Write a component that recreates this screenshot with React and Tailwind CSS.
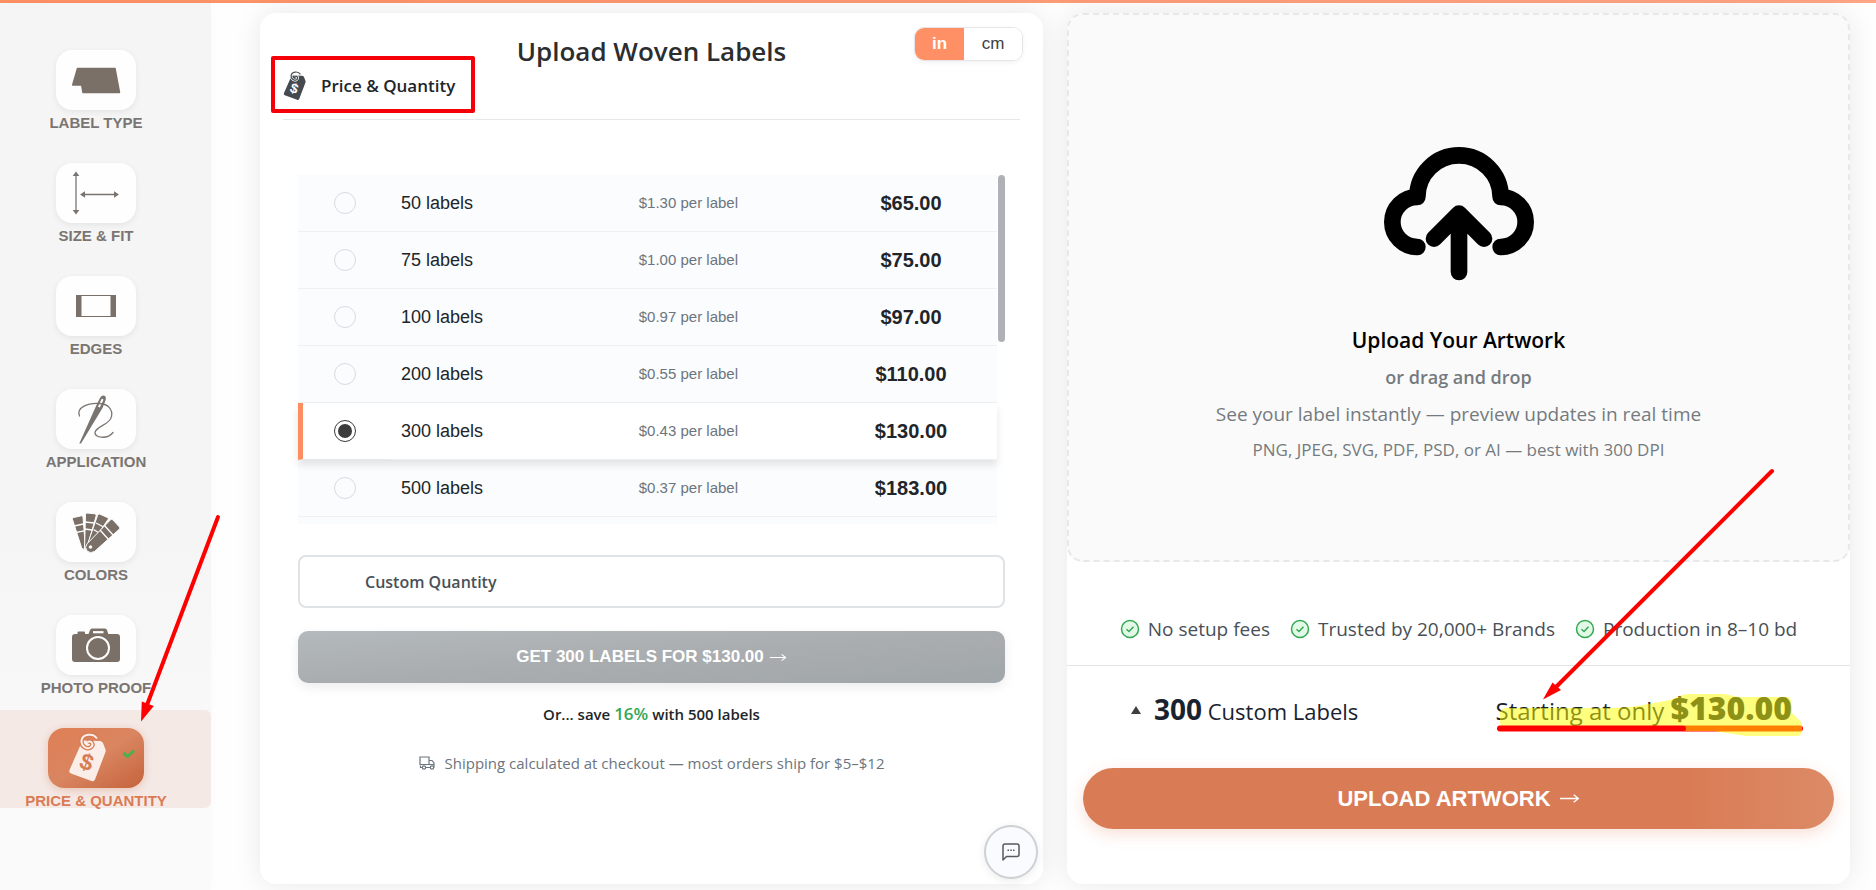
import React, { useState } from "react";

const priceTiers = [
  { qty: 50, each: "$1.30", total: "$65.00" },
  { qty: 75, each: "$1.00", total: "$75.00" },
  { qty: 100, each: "$0.97", total: "$97.00" },
  { qty: 200, each: "$0.55", total: "$110.00" },
  { qty: 300, each: "$0.43", total: "$130.00" },
  { qty: 500, each: "$0.37", total: "$183.00" },
];

function LabelTypeIcon() {
  return (
    <svg viewBox="0 0 80 60" className="w-20 h-15" fill="#7a7068" aria-hidden="true">
      <path
        d="M21.5 18.5h37.5l4.5 24H27l-1.300-7.500h-9z"
        stroke="#7a7068"
        strokeWidth="1.500"
        strokeLinejoin="round"
      />
    </svg>
  );
}

function SizeIcon() {
  return (
    <svg viewBox="0 0 80 60" className="w-20 h-15" fill="#7a7470" aria-hidden="true">
      <path d="M20 11v38M27 31.500h33" stroke="#7a7470" strokeWidth="1.300" />
      <path d="M20 8.500l3.300 4.500h-6.600zM20 51.500l3.300-4.500h-6.600zM24 31.500l5-3.200v6.400zM63 31.500l-5-3.200v6.400z" />
    </svg>
  );
}

function EdgesIcon() {
  return (
    <svg viewBox="0 0 80 60" className="w-20 h-15" fill="#7a7068" aria-hidden="true">
      <path d="M20 19h5.500v22H20zM54.500 19H60v22h-5.500z" />
      <path d="M20 19.500h40M20 40.500h40" stroke="#7a7068" strokeWidth="1.200" />
    </svg>
  );
}

function NeedleIcon() {
  return (
    <svg viewBox="0 0 80 60" className="w-20 h-15" fill="none" aria-hidden="true">
      <path
        d="M23.500 27C20 19 31 13.500 44 14.500c8 .6 13 6 11.500 13C54 36 40 37 39 43.500c-.6 5 12 7.500 18 0"
        stroke="#7a7470"
        strokeWidth="1.300"
        strokeLinecap="round"
      />
      <path
        fillRule="evenodd"
        d="M23.300 54.500L40.500 16l3.200-6.500c1.300-2.500 3-3.500 4.800-2.800 1.700.8 1.700 2.800.8 5.300L46.500 19 25 54.500zM45.300 10.500l-3.300 7.200 1.800.8 3.400-7c.6-1.600-.9-2.600-1.900-1z"
        fill="#7a7470"
      />
    </svg>
  );
}

function SwatchIcon() {
  return (
    <svg viewBox="0 0 80 60" className="w-20 h-15" fill="#7a7068" stroke="#fefefe" aria-hidden="true">
      {/* blades, back to front */}
      <path d="M17.500 15.500l8-1.700q1.300 0 1.500 1.300L29.500 47q-3 1-4-1.500L16.500 17.500q-.2-1.500 1-2z" />
      <path d="M31 11l8 .8q1.500.5 1.200 2L31 46l-2.500 1L29.500 12.500q.2-1.500 1.500-1.500z" />
      <path d="M43.500 12l8 3.500q1.200.8.500 2L34 44l-4 2.500 11.500-33q.8-1.800 2-1.500z" />
      <path d="M18 24l9.500-2M20 30.500l8-1.700M29 20l9.500 1M28.800 27l7.500 1M40 21l8.500 4.500M37.500 27.500l6.500 4" strokeWidth="1.300" />
      <path d="M56.800 17.800l6.700 7.300q.8 1.200-.3 2.200L38.500 49.500q-4 2.500-7.500-.5-3-4 0-7.200L54.500 17.800q1.200-1 2.300 0z" />
      <path d="M48.500 23.500l8.500 9.500M44 28l8.500 9.500" strokeWidth="1.300" />
      <circle cx="34.500" cy="45" r="1.300" fill="#fefefe" />
    </svg>
  );
}

function CameraIcon() {
  return (
    <svg viewBox="0 0 80 60" className="w-20 h-15" fill="#7a7068" aria-hidden="true">
      <path d="M19 19h2.500v-1.500q0-1 1-1H28q1 0 1 1V19h3.500l1.500-4q.7-1.500 2-1.500h13q1.500 0 2 1.500l1.300 4H61q3 0 3 3v22q0 3-3 3H19q-3 0-3-3V22q0-3 3-3z" />
      <path d="M37 17.200h10.500" stroke="#fff" strokeWidth="2.200" />
      <circle cx="42" cy="33" r="11" stroke="#fff" strokeWidth="2" />
    </svg>
  );
}

// Hang tag with a dollar sign, shared by the sidebar and the panel header
function PriceTagIcon({ className, tag, mark }) {
  return (
    <svg viewBox="0 0 40 50" className={className} aria-hidden="true">
      <path
        d="M14.500 7.500l17 .5q2.500 0 3.500 2l2.500 6.500q.5 1.500-.2 3L27 46.500q-1 2.500-3.500 1.500L3 40.500q-2.500-1-1.500-3.500z"
        fill={tag}
      />
      <path
        d="M29 5.500C25-.5 14.500 1 13.500 7.500c-.7 5 4.500 9.500 9 7 4-2.500 1-7.500-3-5.500"
        fill="none"
        stroke={mark}
        strokeWidth="4.500"
      />
      <path
        d="M29 5.500C25-.5 14.500 1 13.500 7.500c-.7 5 4.500 9.500 9 7 4-2.500 1-7.500-3-5.500"
        fill="none"
        stroke={tag}
        strokeWidth="2"
      />
      <text
        x="19"
        y="37"
        transform="rotate(20 19 28)"
        textAnchor="middle"
        fontFamily="Liberation Sans, sans-serif"
        fontWeight="700"
        fontSize="23"
        fill={mark}>
        $
      </text>
    </svg>
  );
}

function CheckCircle() {
  return (
    <svg viewBox="0 0 20 20" className="size-5 shrink-0" fill="none" aria-hidden="true">
      <circle cx="10" cy="10" r="8.500" fill="#e3f9e7" stroke="#34a853" strokeWidth="1.500" />
      <path d="M6.500 10.200l2.500 2.300 4.500-4.700" stroke="#34a853" strokeWidth="1.500" />
    </svg>
  );
}

function Arrow({ className }) {
  return (
    <svg viewBox="0 0 20 10" className={className} fill="none" stroke="currentColor" strokeWidth="1.200" aria-hidden="true">
      <path d="M1 5h17.500M14 1.500L18.500 5 14 8.500" />
    </svg>
  );
}

const steps = [
  { name: "Label Type", icon: <LabelTypeIcon /> },
  { name: "Size & Fit", icon: <SizeIcon /> },
  { name: "Edges", icon: <EdgesIcon /> },
  { name: "Application", icon: <NeedleIcon /> },
  { name: "Colors", icon: <SwatchIcon /> },
  { name: "Photo Proof", icon: <CameraIcon /> },
];

function Sidebar() {
  return (
    <nav className="w-[211px] shrink-0 pt-[29px] flex flex-col gap-[15px] bg-linear-to-b from-[#f5f5f5] from-60% to-[#fafafa] to-90% font-['Liberation_Sans',Arial,sans-serif] shadow-[0_0_12px_rgba(0,0,0,0.02)]">
      {steps.map((step) => (
        <button key={step.name} type="button" className="w-full pt-[18px] pr-[19px] flex flex-col items-center">
          <span className="w-20 h-15 rounded-2xl bg-[#fefefe] shadow-[0_2px_6px_rgba(0,0,0,0.07)]">{step.icon}</span>
          <span className="mt-[6px] text-[15px] leading-[14px] font-bold uppercase text-[#7a7572]">{step.name}</span>
        </button>
      ))}
      <button
        type="button"
        aria-current="step"
        className="relative w-full pt-[18px] pr-[19px] flex flex-col items-center rounded-r-md bg-[#f5e9e6]">
        <span className="w-24 h-15 pl-5 pr-2 flex items-center justify-between rounded-2xl bg-linear-to-br from-[#df7f55] via-[#d98560] to-[#c4633b] shadow-[0_2px_8px_rgba(200,110,60,0.3)]">
          <PriceTagIcon className="w-10 h-[50px]" tag="#fbeee8" mark="#d67c54" />
          <svg viewBox="0 0 14 10" className="w-3.5 h-2.5 mb-2" fill="none" stroke="#4caf50" strokeWidth="3" aria-hidden="true">
            <path d="M1.500 4l4 3.500L12 1.500" />
          </svg>
        </span>
        <span className="mt-[6px] text-[15px] leading-[14px] font-bold uppercase text-[#d97c55]">Price &amp; Quantity</span>
        {/* red pointer drawn over the active step */}
        <svg viewBox="0 0 96 220" className="absolute -top-51 -right-[15px] w-24 h-[220px] pointer-events-none" aria-hidden="true">
          <path d="M88 11L17 199" stroke="#fe0000" strokeWidth="4" strokeLinecap="round" />
          <path d="M11 215.500l.8-20 12 4.500z" fill="#fe0000" />
        </svg>
      </button>
    </nav>
  );
}

function PricePanel({ selected, onSelect }) {
  const [unit, setUnit] = useState("in");
  const tier = priceTiers.find((t) => t.qty === selected);

  return (
    <section className="flex-1 min-w-0 rounded-2xl bg-white shadow-[0_0_28px_rgba(0,0,0,0.09)]">
      <header className="px-5">
        <div className="grid grid-cols-[1fr_auto_1fr] h-[106px]">
          <div className="relative self-end justify-self-start mb-[17px] pl-[3px] flex items-center gap-[14px]">
            <PriceTagIcon className="w-6 h-8" tag="#454a51" mark="#ffffff" />
            <h2 className="text-[17px] leading-8 font-semibold text-[#212529]">Price &amp; Quantity</h2>
            {/* red frame round the step title */}
            <span className="absolute -top-[14px] -bottom-[11px] -left-[9px] -right-5 border-4 border-[#f50008] rounded-xs pointer-events-none" />
          </div>
          <h1 className="mt-5 text-[26px] leading-9 font-semibold text-[#2b2d2f]">Upload Woven Labels</h1>
          <div className="self-start justify-self-end mt-[14px] h-[34px] flex overflow-hidden rounded-[10px] border border-[#e3e6e8] text-[17px] font-['Liberation_Sans',Arial,sans-serif] shadow-[0_2px_5px_rgba(0,0,0,0.05)]">
            {["in", "cm"].map((u) => (
              <button
                key={u}
                type="button"
                aria-pressed={unit === u}
                onClick={() => setUnit(u)}
                className={
                  unit === u
                    ? "w-[49px] bg-[#ff9066] font-bold text-white"
                    : "w-[58px] bg-white text-[#3c4043]"
                }>
                {u}
              </button>
            ))}
          </div>
        </div>
        <hr className="mx-[3px] border-[#e6e7e9]" />
      </header>

      <div className="px-[38px] pt-[55px] pb-20">
        <div className="flex gap-px">
          <div className="flex-1 pb-[7px] bg-[#fafcfd]">
            <table className="w-full table-fixed border-separate border-spacing-0 font-['Liberation_Sans',Arial,sans-serif]">
              <colgroup>
                <col className="w-[93px]" />
                <col className="w-[23%]" />
                <col />
                <col className="w-[172px]" />
              </colgroup>
              <tbody>
                {priceTiers.map((t) => {
                  const active = t.qty === selected;
                  return (
                    <tr
                      key={t.qty}
                      className={
                        active
                          ? "relative bg-white shadow-[0_5px_8px_rgba(0,0,0,0.1)]"
                          : "bg-[#fafcfe]"
                      }>
                      <td
                        className={
                          active
                            ? "h-[57px] pr-[5px] border-b border-[#e6e8ea] border-l-[5px] border-l-[#ff8f60] text-center"
                            : "h-[57px] border-b border-[#eef0f2] text-center"
                        }>
                        <input
                          type="radio"
                          name="quantity"
                          id={`qty-${t.qty}`}
                          checked={active}
                          onChange={() => onSelect(t.qty)}
                          className="block mx-auto size-[22px] p-[3px] appearance-none rounded-full border border-[#d9dcdf] checked:border-[#3c3c3c] checked:bg-[#3c3c3c] checked:bg-clip-content"
                        />
                      </td>
                      <td className="h-[57px] pl-[10px] border-b border-[#eef0f2] text-[18px] text-[#212529]">
                        <label htmlFor={`qty-${t.qty}`}>{t.qty} labels</label>
                      </td>
                      <td className="h-[57px] border-b border-[#eef0f2] text-center text-[15px] text-[#6c757d]">
                        {t.each} per label
                      </td>
                      <td className="h-[57px] border-b border-[#eef0f2] text-center text-[20px] font-bold text-[#212529]">
                        {t.total}
                      </td>
                    </tr>
                  );
                })}
              </tbody>
            </table>
          </div>
          <div className="w-[7px] shrink-0">
            <div className="h-[167px] rounded-full bg-[#aeb2b6]" />
          </div>
        </div>

        <input
          type="text"
          aria-label="Custom Quantity"
          placeholder="Custom Quantity"
          className="block w-full h-[53px] mt-[31px] px-[65px] rounded-lg border-2 border-[#dfe3e5] bg-white text-[16px] font-semibold text-[#495057] placeholder:text-[#495057]"
        />

        <button
          type="button"
          className="w-full h-[52px] mt-[23px] flex items-center justify-center gap-[5px] rounded-[10px] bg-linear-to-br from-[#b3b9bd] via-[#aaadaf] to-[#a0a6a9] text-[17px] font-bold text-white font-['Liberation_Sans',Arial,sans-serif] shadow-[0_4px_12px_rgba(0,0,0,0.08)]">
          GET {selected} LABELS FOR {tier.total}
          <Arrow className="w-[18px] h-[9px]" />
        </button>

        <p className="mt-[15px] text-center text-[15px] leading-8 font-semibold text-[#212529]">
          Or... save <span className="text-[17px] text-[#34a853]">16%</span> with 500 labels
        </p>

        <p className="mt-[17px] flex items-center justify-center gap-[10px] text-[15px] leading-8 text-[#6c757d]">
          <svg viewBox="0 0 16 16" className="size-4" fill="none" stroke="#6c757d" strokeWidth="1.200" aria-hidden="true">
            <path d="M3 12.500H1.500v-2M1 2h9v7.500H1zM10 5.500h3l2 2.500v4.500M10 9.500h5M6.500 12.500h5" />
            <circle cx="5" cy="12.500" r="1.700" />
            <circle cx="13" cy="12.500" r="1.700" />
          </svg>
          Shipping calculated at checkout — most orders ship for $5–$12
        </p>
      </div>
    </section>
  );
}

function UploadPanel({ selected }) {
  const tier = priceTiers.find((t) => t.qty === selected);

  return (
    <section className="flex-1 min-w-0 rounded-2xl bg-white shadow-[0_0_28px_rgba(0,0,0,0.09)]">
      <button
        type="button"
        className="w-full h-[549px] pt-[107px] flex flex-col items-center justify-start rounded-2xl border-2 border-dashed border-[#e6e8ea] bg-[#fafafa] text-[#757a7f]">
        <svg viewBox="0 0 24 24" className="size-[200px]" fill="none" stroke="#000" strokeWidth="2" strokeLinecap="round" strokeLinejoin="round" aria-hidden="true">
          <path d="M7 15a3 3 0 0 1 0-6a5 5 0 0 1 10 0a3 3 0 0 1 0 6" />
          <path d="M12 18v-7M9 14l3-3 3 3" />
        </svg>
        <span className="text-[21px] leading-9 font-semibold text-black">Upload Your Artwork</span>
        <span className="mt-[1px] text-[18px] leading-9 font-semibold">or drag and drop</span>
        <span className="mt-[1px] text-[19px] leading-9">See your label instantly — preview updates in real time</span>
        <span className="text-[17px] leading-9">PNG, JPEG, SVG, PDF, PSD, or AI — best with 300 DPI</span>
      </button>

      <ul className="pt-[52px] pb-[21px] flex justify-center gap-5 border-b border-[#e2e5e8] text-[19px] leading-[30px] font-medium text-[#495057]">
        {["No setup fees", "Trusted by 20,000+ Brands", "Production in 8–10 bd"].map((item) => (
          <li key={item} className="flex items-center gap-2 whitespace-nowrap">
            <CheckCircle />
            {item}
          </li>
        ))}
      </ul>

      <div className="h-[88px] pt-[26px] pl-16 pr-[58px] flex items-start justify-between text-[#1a222e]">
        <button type="button" className="h-9 flex items-center">
          <span className="w-[23px] text-left text-[#3c4043]">
            <svg viewBox="0 0 10 8" className="w-2.5 h-2" fill="currentColor" aria-hidden="true">
              <path d="M5 0l5 8H0z" />
            </svg>
          </span>
          <span className="text-[22px] leading-9 font-medium">
            <strong className="text-[28px] leading-9 font-bold">{selected}</strong> Custom Labels
          </span>
        </button>
        <p className="relative h-9 text-[24px] leading-9 whitespace-nowrap">
          Starting at only <strong className="text-[32px] leading-8 font-extrabold">{tier.total}</strong>
          {/* marker strokes and pointer over the price */}
          <svg viewBox="0 0 320 280" className="absolute -right-[18px] -bottom-3 w-[320px] h-[280px] pointer-events-none" aria-hidden="true">
            <path d="M282 11L66 227" stroke="#fe0000" strokeWidth="4" strokeLinecap="round" />
            <path d="M53 239.500l9.500-17 8.500 7.500z" fill="#fe0000" />
            <path d="M195 268.500h115" stroke="#ff0000" strokeWidth="6" strokeLinecap="round" />
            <path
              d="M10 253q0-5 8-5l100 0q22 0 40-4 12-2 22-4l10-4q3-2 10-2h34l15 3h48q4 0 4 5l1 11 8 8q2 1 2 5v5q0 5-6 5h-50l-32-5H193l-3-5-40 5H20q-10-1-10-9z"
              fill="#ffff00"
              fillOpacity=".5"
            />
            <path d="M10 268.500h183" stroke="#ff0000" strokeWidth="6" strokeLinecap="round" />
          </svg>
        </p>
      </div>

      <div className="px-4 pt-[14px] pb-[54px]">
        <button
          type="button"
          className="w-full h-[61px] flex items-center justify-center gap-2 rounded-full bg-linear-to-r from-[#d97c55] from-80% to-[#dc8a66] text-[22px] font-bold text-white font-['Liberation_Sans',Arial,sans-serif] shadow-[0_5px_16px_rgba(225,110,70,0.22)]">
          UPLOAD ARTWORK
          <Arrow className="w-[21px] h-[11px]" />
        </button>
      </div>
    </section>
  );
}

function App() {
  const [selected, setSelected] = useState(300);

  return (
    <div className="min-h-screen flex flex-col bg-[#fefefe] font-['Open_Sans','Noto_Sans',sans-serif]">
      <div className="h-[3px] bg-linear-to-r from-[#fd8f63] to-[#ffa585]" />
      <div className="flex-1 flex">
        <Sidebar />
        <main className="flex-1 min-w-0 flex gap-6 pt-[10px] pb-[6px] pl-[49px] pr-[26px]">
          <PricePanel selected={selected} onSelect={setSelected} />
          <UploadPanel selected={selected} />
        </main>
      </div>

      {/* floating chat button */}
      <button
        type="button"
        aria-label="Open chat"
        className="fixed bottom-[11px] left-[984px] size-[54px] flex items-center justify-center rounded-full border-2 border-[#cdd1d5] bg-[#fafbfe] shadow-[0_2px_8px_rgba(0,0,0,0.08)]">
        <svg viewBox="0 0 18 18" className="size-[18px]" fill="none" stroke="#565b61" strokeWidth="1.500" strokeLinejoin="round" aria-hidden="true">
          <path d="M1 17V3q0-2 2-2h12q2 0 2 2v8.500q0 2-2 2H4.500z" />
          <path d="M5.500 7.300h1.500M8.300 7.300h1.500M11 7.300h1.500" />
        </svg>
      </button>
    </div>
  );
}

export default App;
